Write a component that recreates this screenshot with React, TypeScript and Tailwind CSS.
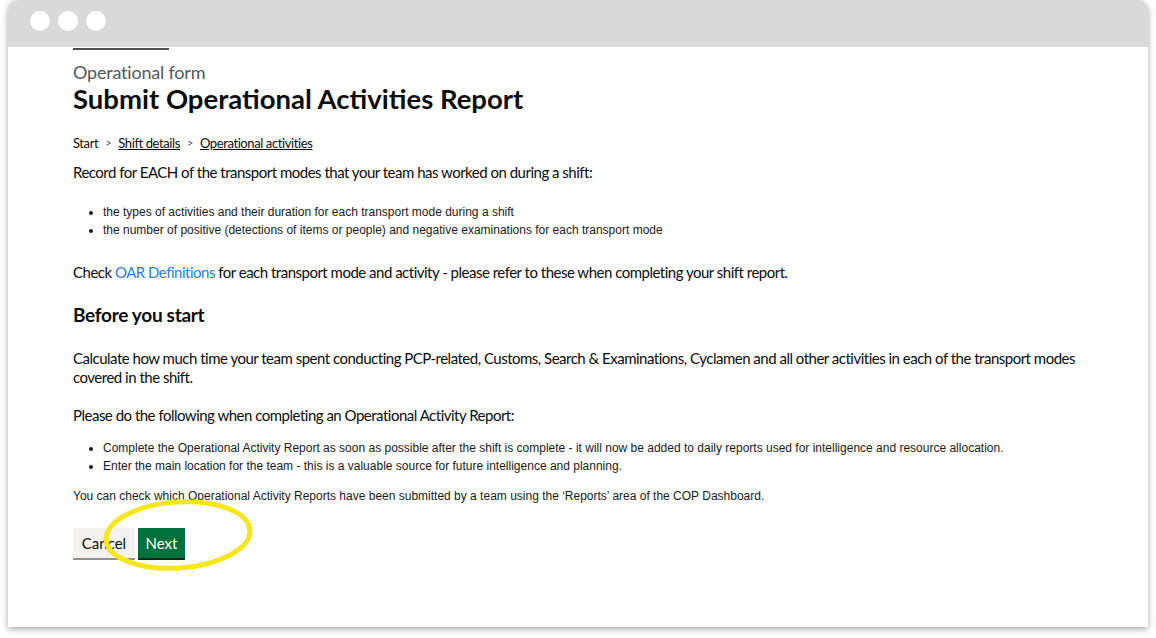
export default function App() {
  const gds = { fontFamily: 'Lato, "Noto Sans", sans-serif' };
  const arial = { fontFamily: '"Liberation Sans", Arial, sans-serif' };
  return (
    <div className="relative w-[1156px] h-[638px] bg-white overflow-hidden">
      <div className="ml-[8px] w-[1140px] rounded-t-[10px] overflow-hidden shadow-[0_2px_6px_rgba(0,0,0,0.35)]">
        <div className="h-[47px] bg-[#dadada] flex items-start gap-[8px] pl-[22px] pt-[11px]">
          <div className="w-[20px] h-[20px] rounded-full bg-white" />
          <div className="w-[20px] h-[20px] rounded-full bg-white" />
          <div className="w-[20px] h-[20px] rounded-full bg-white" />
        </div>
        <div className="h-[579px] bg-white pl-[65px] text-[#0b0c0c]" style={gds}>
          <div className="mt-[1px] h-[2px] w-[96px] bg-[#505050]" />
          <div className="mt-[10px] text-[18px] leading-[24px] text-[#505a5f] tracking-[-0.2px]">Operational form</div>
          <h1 className="text-[27.5px] leading-[30px] font-bold">Submit Operational Activities Report</h1>
          <div className="mt-[19px] text-[13px] leading-[20px] flex items-center tracking-[-0.4px]">
            <span>Start</span>
            <span className="mx-[7px] text-[#505a5f] text-[11px]">&gt;</span>
            <span className="underline">Shift details</span>
            <span className="mx-[7px] text-[#505a5f] text-[11px]">&gt;</span>
            <span className="underline">Operational activities</span>
          </div>
          <p className="mt-[9px] text-[15px] leading-[20px] tracking-[-0.5px]">Record for EACH of the transport modes that your team has worked on during a shift:</p>
          <ul className="mt-[21px] list-disc pl-[30px] text-[12px] leading-[18px] text-[#1a1a1a]" style={arial}>
            <li>the types of activities and their duration for each transport mode during a shift</li>
            <li>the number of positive (detections of items or people) and negative examinations for each transport mode</li>
          </ul>
          <p className="mt-[23px] text-[15px] leading-[20px] tracking-[-0.5px]">
            Check <span className="text-[#2b7de0]">OAR Definitions</span> for each transport mode and activity - please refer to these when completing your shift report.
          </p>
          <h2 className="mt-[20px] text-[19px] leading-[26px] font-bold tracking-[-0.3px]">Before you start</h2>
          <p className="mt-[21px] w-[1040px] text-[15px] leading-[19px] tracking-[-0.5px]">
            Calculate how much time your team spent conducting PCP-related, Customs, Search &amp; Examinations, Cyclamen and all other activities in each of the transport modes covered in the shift.
          </p>
          <p className="mt-[18px] text-[15px] leading-[20px] tracking-[-0.5px]">Please do the following when completing an Operational Activity Report:</p>
          <ul className="mt-[14px] list-disc pl-[30px] text-[12px] leading-[18px] text-[#1a1a1a]" style={arial}>
            <li>Complete the Operational Activity Report as soon as possible after the shift is complete - it will now be added to daily reports used for intelligence and resource allocation.</li>
            <li>Enter the main location for the team - this is a valuable source for future intelligence and planning.</li>
          </ul>
          <p className="mt-[12px] text-[12px] leading-[18px] text-[#1a1a1a]" style={arial}>
            You can check which Operational Activity Reports have been submitted by a team using the ‘Reports’ area of the COP Dashboard.
          </p>
          <div className="mt-[23px] flex gap-[3px]">
            <button className="w-[62px] h-[30px] bg-[#f3f2f1] shadow-[0_2px_0_#929191] text-[15px] text-[#0b0c0c]">Cancel</button>
            <button className="w-[47px] h-[30px] bg-[#00703c] shadow-[0_2px_0_#002d18] text-[15px] text-white">Next</button>
          </div>
        </div>
      </div>
      <svg className="absolute left-[101px] top-[497px] pointer-events-none" width="156" height="80" viewBox="0 0 156 80">
        <ellipse cx="77" cy="38" rx="72" ry="33" fill="none" stroke="#f5e61e" strokeWidth="5" transform="rotate(-4 77 38)" />
      </svg>
    </div>
  );
}
